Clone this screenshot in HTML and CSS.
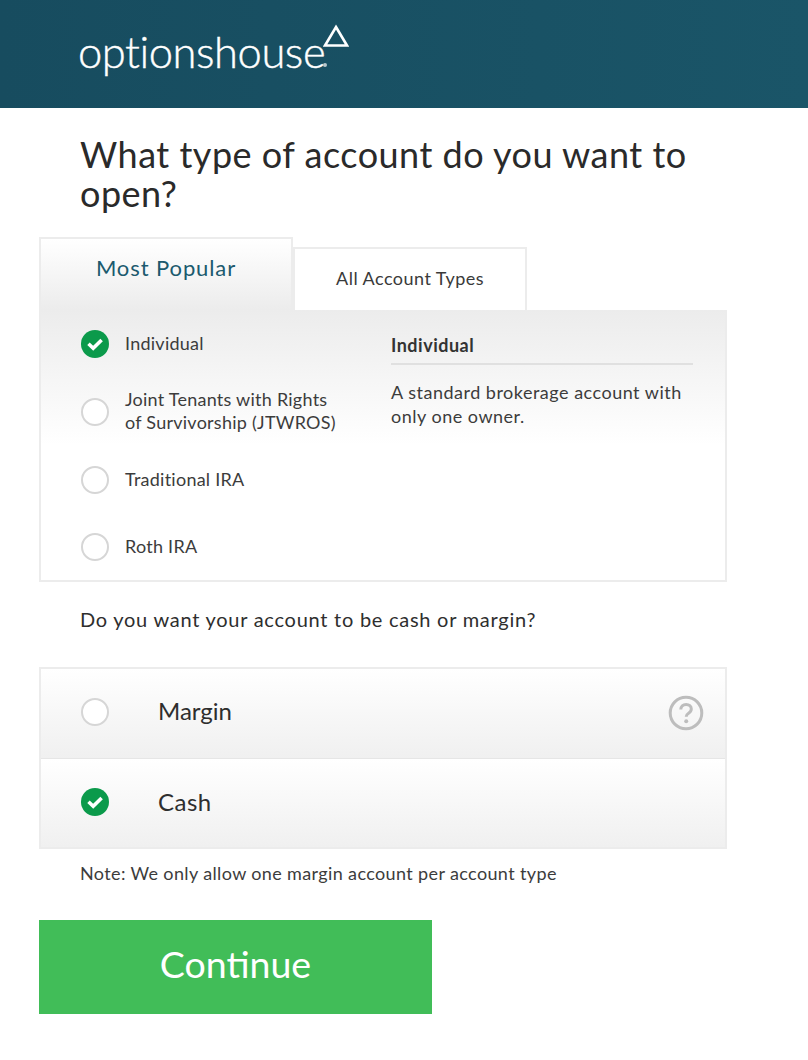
FILE: index.html
```html
<!DOCTYPE html>
<html lang="en">
<head>
<meta charset="utf-8">
<title>Open an account</title>
<link rel="stylesheet" href="styles.css">
</head>
<body>
<header class="topbar">
  <div class="logo">
    <span class="logo-text">optionshouse</span>
    <span class="logo-reg"></span>
    <svg class="logo-tri" width="26" height="24" viewBox="0 0 26 24"><path d="M13 3 24 21.5H2Z" fill="none" stroke="#fff" stroke-width="2.6"/></svg>
  </div>
</header>
<main class="content">
  <h1 class="title">What type of account do you want to open?</h1>
  <div class="tabs">
    <div class="tab tab-active">Most Popular</div>
    <div class="tab tab-other">All Account Types</div>
  </div>
  <section class="panel">
    <ul class="types">
      <li class="type type-first">
        <svg class="check" width="28" height="28" viewBox="0 0 28 28"><circle cx="14" cy="14" r="14" fill="#0b9a4b"/><path d="M7.5 13.8 12.2 18.2 20.6 10" fill="none" stroke="#fff" stroke-width="3.6"/></svg>
        <span class="type-label">Individual</span>
      </li>
      <li class="type type-joint"><span class="radio"></span><span class="type-label">Joint Tenants with Rights<br>of Survivorship (JTWROS)</span></li>
      <li class="type type-ira"><span class="radio"></span><span class="type-label">Traditional IRA</span></li>
      <li class="type type-roth"><span class="radio"></span><span class="type-label">Roth IRA</span></li>
    </ul>
    <aside class="detail">
      <h2 class="detail-title">Individual</h2>
      <p class="detail-text">A standard brokerage account with only one owner.</p>
    </aside>
  </section>
  <p class="question">Do you want your account to be cash or margin?</p>
  <section class="choices">
    <div class="choice">
      <span class="radio"></span>
      <span class="choice-label">Margin</span>
      <svg class="help" width="36" height="36" viewBox="0 0 36 36"><circle cx="18" cy="18" r="15.8" fill="none" stroke="#bdbdbd" stroke-width="3"/><path d="M12.8 14.6c0-3.2 2.2-5.2 5.3-5.2 3 0 5.2 1.9 5.2 4.6 0 2-1 3.1-2.7 4.2-1.6 1-2.4 1.8-2.4 3.6" fill="none" stroke="#bdbdbd" stroke-width="3"/><circle cx="18.2" cy="26.2" r="2" fill="#bdbdbd"/></svg>
    </div>
    <div class="choice choice-last">
      <svg class="check" width="28" height="28" viewBox="0 0 28 28"><circle cx="14" cy="14" r="14" fill="#0b9a4b"/><path d="M7.5 13.8 12.2 18.2 20.6 10" fill="none" stroke="#fff" stroke-width="3.6"/></svg>
      <span class="choice-label choice-label-cash">Cash</span>
    </div>
  </section>
  <p class="note">Note: We only allow one margin account per account type</p>
  <button class="continue" type="button">Continue</button>
</main>
</body>
</html>
```
FILE: styles.css
```css
* { box-sizing: border-box; }
html, body { margin: 0; padding: 0; }
body {
  background: #fff;
  color: #2e2e2e;
  font-family: Lato, "Open Sans", sans-serif;
  height: 1060px;
  overflow: hidden;
}
.topbar {
  height: 108px;
  background: linear-gradient(90deg, #174c5f, #1a5568);
  padding: 22px 0 0 78px;
}
.logo { display: flex; align-items: flex-start; color: #fff; }
.logo-text { font-size: 43.5px; font-weight: 300; line-height: 58px; letter-spacing: -0.45px; -webkit-text-stroke: 0.4px #fff; }
.logo-reg { flex: none; width: 4px; height: 4px; margin: 41px 0 0 -2px; border-radius: 50%; background: #b9c7cc; }
.logo-tri { flex: none; margin: 2px 0 0 -4px; }
.content { padding: 0 0 0 39px; width: 727px; }
.title {
  margin: 27px 0 0 41px;
  font-size: 36px;
  font-weight: 400;
  line-height: 39px;
  letter-spacing: 0.5px;
  color: #2a2a2a;
}
.tabs { display: flex; align-items: flex-end; margin-top: 24px; height: 73px; }
.tab {
  border: 2px solid #ececec;
  border-bottom: 0;
  text-align: center;
}
.tab-active {
  width: 254px;
  height: 73px;
  padding-top: 15px;
  font-size: 22px;
  line-height: 28px;
  letter-spacing: 0.9px;
  color: #1b5a6e;
  background: linear-gradient(#fff, #ececec);
}
.tab-other {
  width: 234px;
  height: 63px;
  padding-top: 17px;
  font-size: 18px;
  line-height: 24px;
  letter-spacing: 0.47px;
  color: #3a3a3a;
  background: #fff;
}
.panel {
  display: flex;
  height: 272px;
  border: 2px solid #ececec;
  border-top: 0;
  background: linear-gradient(#ececec 0, #fff 135px);
}
.types { list-style: none; margin: 0; padding: 0 0 0 40px; width: 350px; font-size: 18px; line-height: 24px; letter-spacing: 0.25px; color: #3c3c3c; }
.type { display: flex; align-items: center; gap: 16px; }
.type-label { margin-top: -2px; }
.type-first, .type-joint, .type-ira { height: 68px; }
.type-joint { line-height: 23px; }
.type-roth { height: 66px; }
.radio {
  flex: none;
  display: block;
  width: 28px;
  height: 28px;
  border: 2px solid #d6d6d6;
  border-radius: 50%;
  background: #fff;
}
.check { flex: none; display: block; }
.detail { width: 302px; }
.detail-title {
  margin: 23px 0 0;
  padding-bottom: 6px;
  border-bottom: 2px solid #e0e0e0;
  font-size: 18px;
  line-height: 24px;
  font-weight: 700;
  letter-spacing: 0.5px;
  color: #333;
}
.detail-text { margin: 15px 0 0; font-size: 18px; line-height: 24px; letter-spacing: 0.5px; color: #3c3c3c; }
.question { margin: 24px 0 0 41px; font-size: 20px; line-height: 26px; letter-spacing: 0.74px; color: #2e2e2e; }
.choices { margin-top: 35px; border: 2px solid #ececec; width: 688px; }
.choice {
  display: flex;
  align-items: center;
  height: 90px;
  padding: 0 21px 3px 40px;
  background: linear-gradient(#fff, #f0f0f0);
  border-bottom: 1px solid #e6e6e6;
}
.choice-last { border-bottom: 0; height: 88px; padding-bottom: 2px; }
.choice-label { margin: -2px 0 0 49px; font-size: 24px; line-height: 30px; letter-spacing: 0; color: #2e2e2e; }
.choice-label-cash { margin-top: 0; letter-spacing: 0.5px; }
.help { margin: 2px 0 0 auto; }
.note { margin: 12px 0 0 41px; font-size: 18px; line-height: 24px; letter-spacing: 0.37px; color: #3c3c3c; }
.continue {
  display: block;
  margin-top: 35px;
  width: 393px;
  height: 94px;
  border: 0;
  background: #41bd58;
  color: #fff;
  font-family: inherit;
  font-size: 37.5px;
  padding: 0 0 8px;
}
```
